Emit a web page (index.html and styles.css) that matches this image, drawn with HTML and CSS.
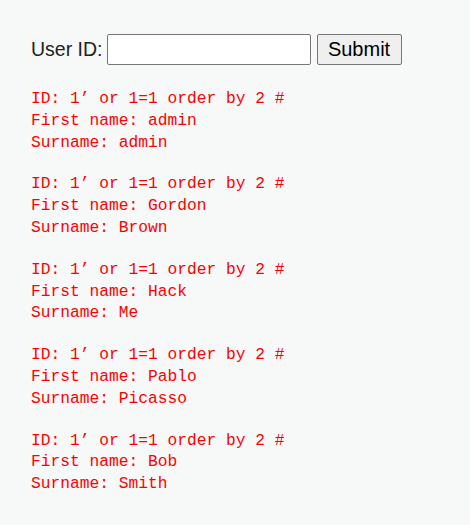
FILE: index.html
```html
<!DOCTYPE html>
<html>
<head>
<meta charset="utf-8">
<link rel="stylesheet" href="styles.css">
</head>
<body>
<div class="page">
  <form class="search">
    <label class="label" for="uid">User ID:</label>
    <input class="field" id="uid" type="text">
    <button class="submit" type="button">Submit</button>
  </form>
  <div class="results">
    <pre class="row">ID: 1’ or 1=1 order by 2 #
First name: admin
Surname: admin</pre>
    <pre class="row">ID: 1’ or 1=1 order by 2 #
First name: Gordon
Surname: Brown</pre>
    <pre class="row">ID: 1’ or 1=1 order by 2 #
First name: Hack
Surname: Me</pre>
    <pre class="row">ID: 1’ or 1=1 order by 2 #
First name: Pablo
Surname: Picasso</pre>
    <pre class="row">ID: 1’ or 1=1 order by 2 #
First name: Bob
Surname: Smith</pre>
  </div>
</div>
</body>
</html>
```
FILE: styles.css
```css
html, body {
  margin: 0;
  padding: 0;
  background: #f7f8f8;
}
.page {
  padding: 34px 0 0 31px;
}
.search {
  display: flex;
  align-items: center;
  height: 31px;
  margin: 0;
}
.label {
  font-family: "Liberation Sans", Arial, sans-serif;
  font-size: 19.5px;
  color: #222;
}
.field {
  box-sizing: border-box;
  width: 204px;
  height: 31px;
  margin: 0 0 0 4px;
  border: 1px solid #767676;
  border-radius: 2px;
  background: #fff;
}
.submit {
  box-sizing: border-box;
  width: 85px;
  height: 31px;
  margin: 0 0 0 6px;
  padding: 0;
  border: 1px solid #767676;
  border-radius: 2px;
  background: #efefef;
  font-family: "Liberation Sans", Arial, sans-serif;
  font-size: 20px;
  color: #000;
}
.results {
  display: flex;
  flex-direction: column;
  gap: 20px;
  margin-top: 23px;
}
.row {
  margin: 0;
  font-family: "Liberation Mono", "Courier New", monospace;
  font-size: 16.25px;
  line-height: 21.8px;
  color: #f00;
}
```
